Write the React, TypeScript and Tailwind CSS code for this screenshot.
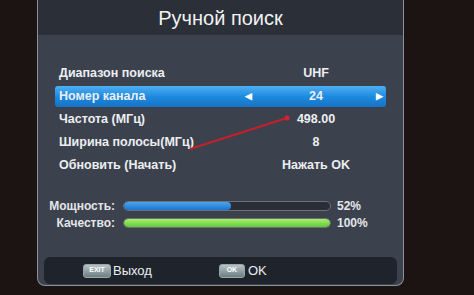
import React from "react";

const rows = [
  { label: "Диапазон поиска", value: "UHF" },
  { label: "Номер канала", value: "24", active: true },
  { label: "Частота (МГц)", value: "498.00" },
  { label: "Ширина полосы(МГц)", value: "8" },
  { label: "Обновить (Начать)", value: "Нажать OK" },
];

const Bar = ({ label, pct, fill }: { label: string; pct: number; fill: string }) => (
  <div className="flex items-center h-[17px]">
    <div className="w-[77px] text-right pr-[8px] text-[12px] font-bold text-[#e4e6ea]">{label}</div>
    <div className="relative w-[208px] h-[10px] rounded-full bg-[#2a2e36] border border-[#6b717b] overflow-hidden">
      <div className={`h-full rounded-full ${fill}`} style={{ width: `${pct}%` }} />
    </div>
    <div className="pl-[6px] text-[12px] font-bold text-[#e4e6ea]">{pct}%</div>
  </div>
);

const Key = ({ text, w }: { text: string; w: string }) => (
  <span
    className={`inline-flex items-center justify-center h-[14px] ${w} rounded-[3px] bg-gradient-to-b from-[#b7c4c6] to-[#6f7f82] text-[7px] font-bold text-white border border-[#9aa7a9]`}
  >
    {text}
  </span>
);

export default function App() {
  return (
    <div
      className="relative w-[474px] h-[295px] overflow-hidden bg-[#1b1413]"
      style={{ fontFamily: '"Liberation Sans", Arial, sans-serif' }}
    >
      <div className="ml-[37px] w-[367px] h-[286px] flex flex-col bg-[#3c424d] border-x border-b border-[#8c9199] rounded-b-[8px] overflow-hidden">
        <div className="h-[35px] shrink-0 bg-[#2b2f37] flex items-center justify-center text-[20px] text-[#f2f2f2]">
          Ручной поиск
        </div>

        <div className="pt-[27px] flex flex-col">
          {rows.map((r) => (
            <div key={r.label} className="h-[23px] flex items-center px-[17px]">
              <div
                className={`flex-1 h-[21px] flex items-center rounded-[3px] pl-[4px] text-[12.5px] font-bold text-[#eceef2] ${
                  r.active ? "bg-gradient-to-b from-[#4db0f2] via-[#1d8ae0] to-[#1573c4]" : ""
                }`}
              >
                <div className="w-[186px]">{r.label}</div>
                <div className="w-[25px] text-[9px] text-white">{r.active ? "◀" : ""}</div>
                <div className="w-[92px] text-center">{r.value}</div>
                <div className="flex-1 text-right pr-[3px] text-[9px] text-white">{r.active ? "▶" : ""}</div>
              </div>
            </div>
          ))}
        </div>

        <div className="pt-[20px] pl-[8px] flex flex-col">
          <Bar label="Мощность:" pct={52} fill="bg-gradient-to-b from-[#4aa6ee] to-[#1c74cf]" />
          <Bar label="Качество:" pct={100} fill="bg-gradient-to-b from-[#a6f06a] to-[#5fc93a]" />
        </div>

        <div className="mt-auto mx-[6px] mb-[1px] h-[27px] rounded-[6px] bg-[#1f242c] flex items-center text-[13px] text-[#eceef2]">
          <div className="ml-[39px] flex items-center gap-[2px]">
            <Key text="EXIT" w="w-[28px]" />
            <span>Выход</span>
          </div>
          <div className="ml-[67px] flex items-center gap-[3px]">
            <Key text="OK" w="w-[26px]" />
            <span>OK</span>
          </div>
        </div>
      </div>

      <svg className="absolute left-0 top-0 pointer-events-none" width="474" height="295">
        <line x1="190" y1="149" x2="287" y2="118" stroke="#c4202a" strokeWidth="2" />
        <circle cx="287" cy="118" r="2.5" fill="#d4222c" />
      </svg>
    </div>
  );
}
